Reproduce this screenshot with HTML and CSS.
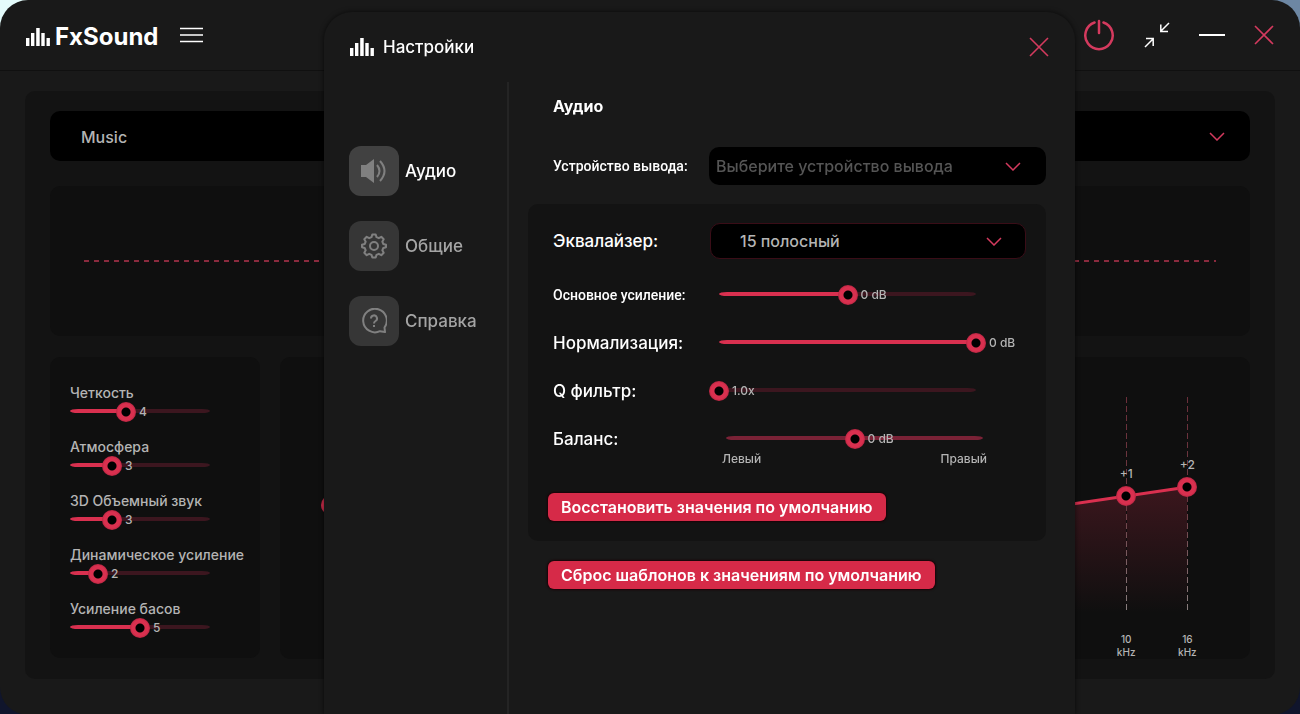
FILE: index.html
```html
<!DOCTYPE html>
<html lang="ru">
<head>
  <meta charset="UTF-8">
  <title>FxSound</title>
  <meta name="viewport" content="width=device-width, initial-scale=1">
  <link rel="stylesheet" href="styles.css">
</head>
<body>

  <div class="window">
    <header class="topbar">
      <div class="brand">
        <svg width="24" height="18" viewBox="0 0 24 18" fill="currentColor" aria-hidden="true">
          <path d="M0 10h3.400v8H0zM5 5h3.400v13H5zM10.200 0h3.500v18h-3.500zM15.300 5h3.400v13h-3.400zM20.500 10h3.400v8h-3.400z"/>
        </svg>
        <span class="brand-name">FxSound</span>
      </div>
      <button class="icon-btn menu-btn" type="button" aria-label="Меню">
        <svg width="24" height="16" viewBox="0 0 24 16" stroke="currentColor" stroke-width="1.500">
          <path d="M0 1.500h23M0 8h23M0 14.500h23"/>
        </svg>
      </button>

      <div class="window-controls">
        <button class="icon-btn accent" type="button" aria-label="Питание">
          <svg width="32" height="32" viewBox="0 0 32 32" fill="none" stroke="currentColor" stroke-width="2.500" stroke-linecap="round">
            <path d="M11.500 3.500a13.700 13.700 0 1 0 9 0"/>
            <path d="M16 2v12"/>
          </svg>
        </button>
        <button class="icon-btn" type="button" aria-label="Свернуть окно">
          <svg width="26" height="26" viewBox="0 0 26 26" fill="none" stroke="currentColor" stroke-width="1.500">
            <path d="M25 1l-8 8M16.800 2.500v7H24M1 25l8-8M2 16.500h7.200V24"/>
          </svg>
        </button>
        <button class="icon-btn" type="button" aria-label="Скрыть">
          <svg width="26" height="20" viewBox="0 0 26 20" stroke="currentColor" stroke-width="2">
            <path d="M0 10h26"/>
          </svg>
        </button>
        <button class="icon-btn accent" type="button" aria-label="Закрыть">
          <svg width="20" height="20" viewBox="0 0 20 20" stroke="currentColor" stroke-width="1.600">
            <path d="M1 1l18 18M19 1L1 19"/>
          </svg>
        </button>
      </div>
    </header>

    <main class="main-panel">
      <div class="select select-preset">
        <select aria-label="Шаблон">
          <option>Music</option>
        </select>
        <svg class="chevron" width="16" height="9" viewBox="0 0 16 9" aria-hidden="true"><path d="M1 1l7 7 7-7"/></svg>
      </div>

      <div class="card visualizer">
        <div class="dash-line"></div>
      </div>

      <div class="cards">
        <section class="card effects">
          <div class="effect">
            <label for="clarity">Четкость</label>
            <div class="slider" style="--fill: 0.4">
              <input type="range" id="clarity" min="0" max="10" value="4">
              <output for="clarity">4</output>
            </div>
          </div>
          <div class="effect">
            <label for="ambience">Атмосфера</label>
            <div class="slider" style="--fill: 0.3">
              <input type="range" id="ambience" min="0" max="10" value="3">
              <output for="ambience">3</output>
            </div>
          </div>
          <div class="effect">
            <label for="surround">3D Объемный звук</label>
            <div class="slider" style="--fill: 0.3">
              <input type="range" id="surround" min="0" max="10" value="3">
              <output for="surround">3</output>
            </div>
          </div>
          <div class="effect">
            <label for="boost">Динамическое усиление</label>
            <div class="slider" style="--fill: 0.2">
              <input type="range" id="boost" min="0" max="10" value="2">
              <output for="boost">2</output>
            </div>
          </div>
          <div class="effect">
            <label for="bass">Усиление басов</label>
            <div class="slider" style="--fill: 0.5">
              <input type="range" id="bass" min="0" max="10" value="5">
              <output for="bass">5</output>
            </div>
          </div>
        </section>

        <section class="card equalizer">
          <div class="bands" id="bands">
            <svg class="curve" viewBox="0 0 14 24" preserveAspectRatio="none" aria-hidden="true">
              <defs>
                <linearGradient id="curveFill" x1="0" y1="0" x2="0" y2="1">
                  <stop offset="0" stop-color="#d9304f" stop-opacity="0.220"/>
                  <stop offset="1" stop-color="#d9304f" stop-opacity="0"/>
                </linearGradient>
              </defs>
              <polygon id="curveArea" fill="url(#curveFill)"/>
              <polyline id="curveLine" class="curve-line"/>
            </svg>
          </div>
        </section>
      </div>
    </main>
  </div>

  <dialog class="settings" open aria-labelledby="settings-title">
    <header class="settings-header">
      <svg width="24" height="18" viewBox="0 0 24 18" fill="currentColor" aria-hidden="true">
        <path d="M0 10h3.400v8H0zM5 5h3.400v13H5zM10.200 0h3.500v18h-3.500zM15.300 5h3.400v13h-3.400zM20.500 10h3.400v8h-3.400z"/>
      </svg>
      <h1 id="settings-title">Настройки</h1>
      <button class="icon-btn accent" type="button" aria-label="Закрыть настройки">
        <svg width="20" height="20" viewBox="0 0 20 20" stroke="currentColor" stroke-width="1.600">
          <path d="M1 1l18 18M19 1L1 19"/>
        </svg>
      </button>
    </header>

    <div class="settings-body">
      <nav class="tabs">
        <button class="tab active" type="button">
          <span class="tab-icon">
            <svg width="26" height="26" viewBox="0 0 26 26" fill="none" stroke="currentColor" stroke-width="2">
              <path d="M0 7h5l8-6v24l-8-6H0z" fill="currentColor" stroke="none"/>
              <path d="M16 7q5 6 0 12M19 3q9 10 0 20"/>
            </svg>
          </span>
          Аудио
        </button>
        <button class="tab" type="button">
          <span class="tab-icon">
            <svg width="26" height="26" viewBox="0 0 26 26" fill="none" stroke="currentColor" stroke-width="2" stroke-linejoin="round">
              <path d="M11.300 1.500h3.400l.8 2.700 2.300 1 2.500-1.400 2.400 2.400-1.400 2.500 1 2.300 2.700.8v2.400l-2.700.8-1 2.300 1.400 2.500-2.400 2.400-2.500-1.400-2.300 1-.8 2.700h-3.400l-.8-2.700-2.300-1-2.500 1.400-2.400-2.400 1.400-2.500-1-2.300-2.700-.8v-2.400l2.700-.8 1-2.300-1.400-2.500 2.400-2.400 2.500 1.400 2.300-1z"/>
              <circle cx="13" cy="13" r="4"/>
            </svg>
          </span>
          Общие
        </button>
        <button class="tab" type="button">
          <span class="tab-icon">
            <svg width="26" height="26" viewBox="0 0 26 26" fill="none" stroke="currentColor" stroke-width="2">
              <path d="M24 24l-.5-4.500A11.800 11.800 0 1 0 19 23.200z" stroke-linejoin="round"/>
              <path d="M10 10.500a3 3 0 1 1 4.500 2.500q-1.500.9-1.500 2.500M13 17v2"/>
            </svg>
          </span>
          Справка
        </button>
      </nav>

      <section class="pane">
        <h2>Аудио</h2>

        <div class="row row-output">
          <label class="narrow" for="output">Устройство вывода:</label>
          <div class="select select-output">
            <select id="output">
              <option>Выберите устройство вывода</option>
            </select>
            <svg class="chevron" width="16" height="9" viewBox="0 0 16 9" aria-hidden="true"><path d="M1 1l7 7 7-7"/></svg>
          </div>
        </div>

        <div class="group">
          <div class="row row-bands">
            <label for="eq">Эквалайзер:</label>
            <div class="select select-eq">
              <select id="eq">
                <option>15 полосный</option>
              </select>
              <svg class="chevron" width="16" height="9" viewBox="0 0 16 9" aria-hidden="true"><path d="M1 1l7 7 7-7"/></svg>
            </div>
          </div>
          <div class="row">
            <label class="narrow" for="gain">Основное усиление:</label>
            <div class="slider" style="--fill: 0.5">
              <input type="range" id="gain" min="-10" max="10" value="0">
              <output for="gain">0 dB</output>
            </div>
          </div>
          <div class="row">
            <label for="normalize">Нормализация:</label>
            <div class="slider" style="--fill: 1">
              <input type="range" id="normalize" min="-10" max="0" value="0">
              <output for="normalize">0 dB</output>
            </div>
          </div>
          <div class="row">
            <label for="qfilter">Q фильтр:</label>
            <div class="slider" style="--fill: 0">
              <input type="range" id="qfilter" min="1" max="3" value="1">
              <output for="qfilter">1.0x</output>
            </div>
          </div>
          <div class="row">
            <label for="balance">Баланс:</label>
            <div class="slider slider-balance" style="--fill: 0.5">
              <input type="range" id="balance" min="-10" max="10" value="0">
              <output for="balance">0 dB</output>
            </div>
          </div>
          <div class="balance-ends">
            <span>Левый</span>
            <span>Правый</span>
          </div>
          <button class="btn" type="button">Восстановить значения по умолчанию</button>
        </div>

        <button class="btn" type="button">Сброс шаблонов к значениям по умолчанию</button>
      </section>
    </div>
  </dialog>

  <script src="script.js"></script>
</body>
</html>
```

FILE: styles.css
```css
:root {
  --bg: #191919;
  --panel: #131313;
  --card: #0f0f0f;
  --accent: #d9304f;
  --text: #b4b4b4;
  --white: #ffffff;
}

* {
  box-sizing: border-box;
}

body {
  margin: 0;
  min-height: 100vh;
  display: flex;
  font-family: Inter, "Noto Sans", sans-serif;
  font-weight: 500;
  color: var(--text);
  background: linear-gradient(90deg, #e4fbfb 50%, #6d87a3 50%) top / 100% 50% no-repeat, #10152c;
}

button, select, input {
  font: inherit;
  color: inherit;
  margin: 0;
}

h1, h2 {
  margin: 0;
  color: var(--white);
}

.window {
  flex: 1;
  background-color: var(--bg);
  border-radius: 28px;
  overflow: hidden;
}

/* Top bar */
.topbar {
  display: flex;
  align-items: center;
  height: 71px;
  padding: 0 26px;
  border-bottom: 1px solid #101010;
  color: var(--white);
}

.brand {
  display: flex;
  align-items: center;
  gap: 5px;
  padding-top: 3px;
}

.brand-name {
  font-size: 24px;
  font-weight: 700;
}

.icon-btn {
  display: flex;
  padding: 0;
  border: none;
  background: none;
  color: var(--white);
  cursor: pointer;
}

.icon-btn.accent {
  color: #d43a5e;
}

.menu-btn {
  margin-left: 22px;
}

.window-controls {
  display: flex;
  align-items: center;
  gap: 29px;
  margin-left: auto;
}

/* Main panel */
.main-panel {
  margin: 20px 25px 36px;
  padding: 20px 25px;
  border-radius: 10px;
  background-color: var(--panel);
}

.card {
  border-radius: 10px;
  background-color: var(--card);
}

.visualizer {
  display: flex;
  align-items: center;
  height: 150px;
  margin: 25px 0 21px;
  padding: 0 34px;
}

.dash-line {
  flex: 1;
  height: 2px;
  background: repeating-linear-gradient(90deg, #8a2a3e 0 5px, transparent 5px 10px);
}

.cards {
  display: flex;
  gap: 20px;
}

.effects {
  width: 210px;
  height: 301px;
  padding: 27px 20px;
}

.effect {
  height: 54px;
  width: 140px;
  font-size: 14px;
  line-height: 18px;
  white-space: nowrap;
}

/* Sliders */
.slider {
  position: relative;
  height: 20px;
}

.slider::before {
  content: "";
  position: absolute;
  inset: 7px 0 auto;
  height: 4px;
  border-radius: 8px / 2px;
  background: linear-gradient(var(--accent), var(--accent)) 0 / calc(var(--fill) * 100%) 100% no-repeat, #3c161f;
}

.slider input {
  position: relative;
  display: block;
  width: calc(100% + 20px);
  height: 20px;
  margin: 0 -10px;
  background: none;
  appearance: none;
}

input::-webkit-slider-thumb {
  appearance: none;
  width: 20px;
  height: 20px;
  border-radius: 50%;
  background: radial-gradient(circle, #000 4px, #d9304f 5px, #d9304f 8px, #b92642 10px);
}

.slider output {
  position: absolute;
  top: 1px;
  left: calc(var(--fill) * 100% + 13px);
  font-size: 12px;
  line-height: 18px;
  white-space: nowrap;
  pointer-events: none;
}

.slider-balance::before {
  background: #7a2236;
}

/* Equalizer */
.equalizer {
  flex: 1;
  padding: 40px 32px 0 20px;
}

.bands {
  position: relative;
  display: grid;
  grid-template-columns: repeat(15, 1fr);
}

.curve {
  position: absolute;
  top: 0;
  left: calc(100% / 30);
  width: calc(100% * 14 / 15);
  height: 216px;
  overflow: visible;
}

.curve-line {
  fill: none;
  stroke: var(--accent);
  stroke-width: 3px;
  vector-effect: non-scaling-stroke;
}

.band {
  position: relative;
  display: flex;
  flex-direction: column;
  align-items: center;
  gap: 20px;
  font-size: 10px;
  line-height: 13px;
  text-align: center;
}

.band-track {
  height: 216px;
  background:
    repeating-linear-gradient(transparent 0 6px, var(--card) 6px 9px) center / 1px 100% no-repeat,
    linear-gradient(#6b2f3a, #6b3a42 50%, #8a8080) center / 1px 100% no-repeat;
}

.band input {
  display: block;
  width: 20px;
  height: 236px;
  margin: -10px 0;
  background: none;
  appearance: none;
  writing-mode: vertical-lr;
  direction: rtl;
}

.band output {
  position: absolute;
  top: calc(var(--y) * 216px - 31px);
  font-size: 12px;
  line-height: 18px;
}

.band label {
  width: 24px;
}

/* Selects */
.select {
  display: grid;
  align-items: center;
}

.select select,
.select .chevron {
  grid-area: 1 / 1;
}

.select select {
  width: 100%;
  height: 100%;
  border: none;
  border-radius: 10px;
  background-color: #000;
  appearance: none;
}

.chevron {
  justify-self: end;
  fill: none;
  stroke: #d43a5e;
  stroke-width: 1.5px;
  pointer-events: none;
}

.select-preset {
  height: 50px;
  font-size: 16px;
}

.select-preset select {
  padding: 2px 31px 0;
}

.select-preset .chevron {
  margin-right: 25px;
}

.select-output {
  flex: 1;
  height: 38px;
}

.select-output select {
  padding: 0 7px;
  color: #555;
}

.select-output .chevron {
  margin-right: 25px;
}

.select-eq {
  flex: 1;
  height: 36px;
  margin: 0 20px 0 1px;
}

.select-eq select {
  padding: 0 29px;
  border: 1px solid #3a0d17;
}

.select-eq .chevron {
  margin-right: 24px;
}

/* Settings window */
.settings {
  position: fixed;
  inset: 12px 225px 0 324px;
  display: flex;
  flex-direction: column;
  width: auto;
  height: auto;
  max-width: none;
  max-height: none;
  margin: 0;
  padding: 0;
  border: none;
  border-radius: 28px 28px 0 0;
  background-color: var(--bg);
  color: var(--text);
  font-size: 17px;
  box-shadow: 0 0 5px #000a;
}

.settings-header {
  display: flex;
  align-items: center;
  gap: 9px;
  height: 70px;
  padding: 0 26px;
  color: var(--white);
}

.settings-header h1 {
  font-size: 17px;
  font-weight: 500;
}

.settings-header .icon-btn {
  margin-left: auto;
}

.settings-body {
  display: flex;
  flex: 1;
}

.tabs {
  display: flex;
  flex-direction: column;
  gap: 25px;
  width: 185px;
  padding: 64px 25px;
  border-right: 2px solid #242424;
}

.tab {
  display: flex;
  align-items: center;
  gap: 6px;
  padding: 0;
  border: none;
  background: none;
  color: #a4a4a4;
  cursor: pointer;
}

.tab.active {
  color: var(--white);
}

.tab-icon {
  display: flex;
  align-items: center;
  justify-content: center;
  width: 50px;
  height: 50px;
  border-radius: 12px;
  background-color: #363636;
  color: #808080;
}

.tab.active .tab-icon {
  background-color: #414141;
}

.pane {
  display: flex;
  flex-direction: column;
  align-items: flex-start;
  flex: 1;
  padding: 14px 29px 0 19px;
}

.pane h2 {
  padding-left: 25px;
  font-size: 16px;
  font-weight: 700;
  line-height: 20px;
}

.row {
  display: flex;
  align-items: center;
  align-self: stretch;
  height: 48px;
  padding-left: 25px;
  color: var(--white);
}

.row label {
  width: 156px;
  white-space: nowrap;
}

.row label.narrow {
  font-family: Roboto, sans-serif;
  font-size: 14px;
}

.row .select {
  color: var(--text);
  font-size: 16px;
}

.row .slider {
  flex: 1;
  margin: 0 70px 0 10px;
  color: var(--text);
}

.row .slider-balance {
  margin: 0 63px 0 17px;
}

.row-output {
  margin-top: 26px;
}

.group {
  align-self: stretch;
  margin: 14px 0 20px;
  padding: 13px 0 20px;
  border-radius: 10px;
  background-color: var(--panel);
}

.row-bands {
  margin-bottom: 6px;
}

.balance-ends {
  display: flex;
  justify-content: space-between;
  margin: -12px 59px 0 194px;
  font-size: 12px;
  line-height: 16px;
}

.btn {
  height: 28px;
  margin-left: 20px;
  padding: 0 13px;
  border: none;
  border-radius: 6px;
  background-color: #d62a48;
  color: var(--white);
  font-size: 16px;
  font-weight: 600;
  box-shadow: 0 0 2px 1px #1c0006;
  cursor: pointer;
}

.group .btn {
  display: block;
  margin-top: 26px;
}
```

FILE: script.js
```js
const bands = document.getElementById('bands');
const freqs = ['25 Hz', '40 Hz', '63 Hz', '100 Hz', '160 Hz', '250 Hz', '400 Hz', '630 Hz',
  '1 kHz', '1.6 kHz', '2.5 kHz', '4 kHz', '6.3 kHz', '10 kHz', '16 kHz'];
const gains = [0, 0, 0, 0, 0, 0, 0, 0, 0, 0, 0, 0, 0, 1, 2];

freqs.forEach((freq, i) => {
  const gain = gains[i];
  const band = document.createElement('div');
  band.className = 'band';
  band.style.setProperty('--y', (12 - gain) / 24);
  band.innerHTML = `
    <div class="band-track">
      <input type="range" id="band${i}" min="-12" max="12" value="${gain}">
    </div>
    <output for="band${i}">${gain > 0 ? '+' : ''}${gain}</output>
    <label for="band${i}">${freq}</label>`;
  bands.appendChild(band);
});

// Curve through the band gains, 24 dB tall
const points = gains.map((gain, i) => `${i},${12 - gain}`).join(' ');
document.getElementById('curveLine').setAttribute('points', points);
document.getElementById('curveArea').setAttribute('points', `${points} 14,24 0,24`);
```
